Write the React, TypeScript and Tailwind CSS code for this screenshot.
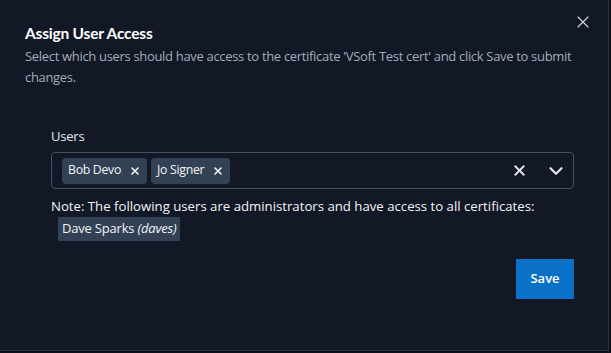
import { X, ChevronDown } from 'lucide-react';

function Chip({ label }: { label: string }) {
  return (
    <span className="flex h-[26px] items-center gap-[8px] rounded-sm bg-[#334155] pl-[6px] pr-[6px] text-[12.3px] tracking-[-0.3px] text-gray-100">
      {label}
      <X size={12} strokeWidth={3.2} className="text-gray-100" />
    </span>
  );
}

export default function App() {
  return (
    <div className="h-[353px] w-[611px] bg-[#0b0f17]" style={{ fontFamily: '"Open Sans", "Noto Sans", sans-serif' }}>
      <div className="relative h-[351px] w-[609px] border-r border-b border-[#2b3340] bg-[#121826] pl-[25px] pr-[15px] pt-[22px]">
        <button type="button" className="absolute right-[15px] top-[12px] text-gray-300">
          <X size={20} strokeWidth={1.4} />
        </button>

        <h2
          className="text-[15.5px] font-bold leading-[22px] tracking-[-0.2px] text-white"
          style={{ fontFamily: 'Lato, "Open Sans", sans-serif' }}
        >
          Assign User Access
        </h2>
        <p className="mt-[2px] text-[13px] leading-[21px] tracking-[-0.32px] text-[#a3acb9]">
          Select which users should have access to the certificate 'VSoft Test cert' and click Save to submit changes.
        </p>

        <div className="ml-[26px] mr-[19px] mt-[39px]">
          <label className="block text-[13px] leading-[18px] tracking-[-0.2px] text-gray-200">Users</label>
          <div className="mt-[7px] flex h-[37px] items-center rounded-[4px] border border-[#48505e] pl-[10px] pr-[6px]">
            <div className="flex flex-1 gap-[4px]">
              <Chip label="Bob Devo" />
              <Chip label="Jo Signer" />
            </div>
            <X size={17} strokeWidth={2.6} className="mr-[17px] text-gray-200" />
            <ChevronDown size={22} strokeWidth={2.4} className="text-gray-200" />
          </div>

          <p className="mt-[8px] text-[13.2px] leading-[18px] text-gray-100">
            Note: The following users are administrators and have access to all certificates:
          </p>
          <div className="mt-[2px] flex pl-[7px]">
            <span className="flex h-[24px] items-center bg-[#334155] px-[4px] text-[13px] tracking-[-0.2px] text-gray-100">
              Dave Sparks&nbsp;<i>(daves)</i>
            </span>
          </div>

          <div className="mt-[18px] flex justify-end">
            <button type="button" className="h-[40px] w-[58px] bg-[#0a71c6] text-[13px] font-semibold text-white">
              Save
            </button>
          </div>
        </div>
      </div>
    </div>
  );
}
